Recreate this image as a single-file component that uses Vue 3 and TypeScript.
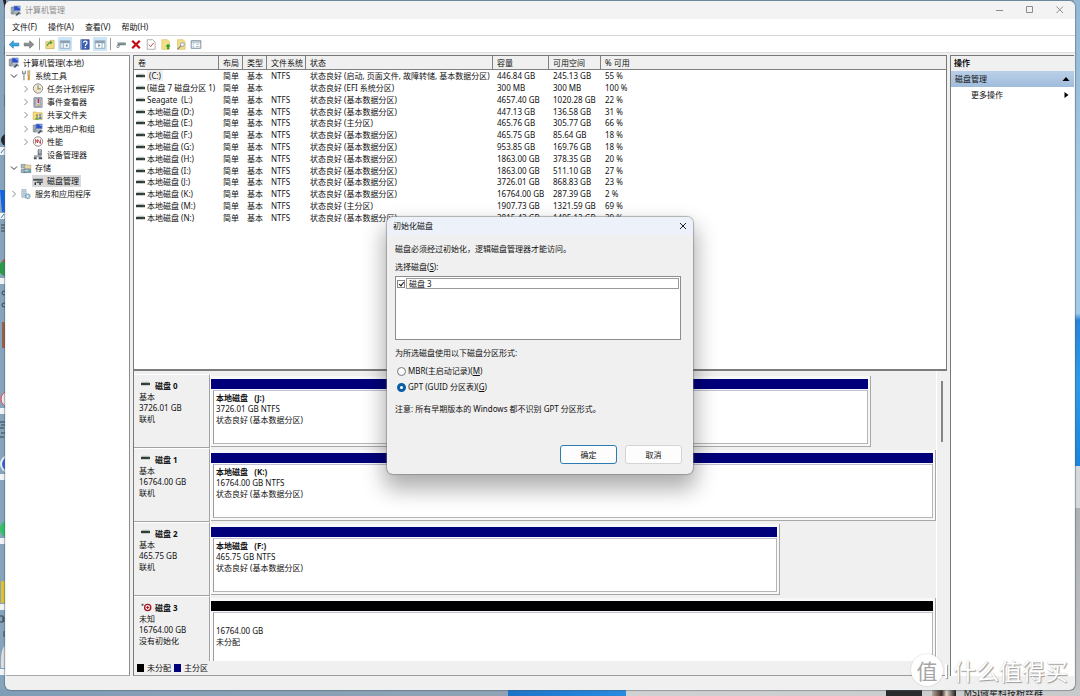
<script setup lang="ts">
import { ref } from 'vue'

interface TreeNode { label: string; icon: string; level: number; open?: boolean; leaf?: boolean; selected?: boolean }
interface Volume { name: string; fs: string; status: string; size: string; free: string; pct: string; focus?: boolean }
interface Disk { name: string; kind: string; size: string; state: string; width: number; title: string; detail: string; status: string; color: string; icon: string }

const menus: string[] = ['文件(F)', '操作(A)', '查看(V)', '帮助(H)']

const tools: { icon: string; label: string; on?: boolean }[] = [
  { icon: 'back', label: '后退' },
  { icon: 'forward', label: '前进' },
  { icon: 'sep', label: '' },
  { icon: 'folder-up', label: '上一级' },
  { icon: 'pane-left', label: '显示/隐藏控制台树', on: true },
  { icon: 'space', label: '' },
  { icon: 'help', label: '帮助' },
  { icon: 'pane-right', label: '显示/隐藏操作窗格', on: true },
  { icon: 'sep', label: '' },
  { icon: 'device', label: '磁盘' },
  { icon: 'delete', label: '删除' },
  { icon: 'doc-check', label: '属性' },
  { icon: 'doc-up', label: '打开' },
  { icon: 'doc-find', label: '浏览' },
  { icon: 'list', label: '设置' },
]

const tree: TreeNode[] = [
  { label: '计算机管理(本地)', icon: 'computer', level: 0 },
  { label: '系统工具', icon: 'tools', level: 1, open: true },
  { label: '任务计划程序', icon: 'clock', level: 2 },
  { label: '事件查看器', icon: 'event', level: 2 },
  { label: '共享文件夹', icon: 'share', level: 2 },
  { label: '本地用户和组', icon: 'computer', level: 2 },
  { label: '性能', icon: 'perf', level: 2 },
  { label: '设备管理器', icon: 'devmgr', level: 2, leaf: true },
  { label: '存储', icon: 'storage', level: 1, open: true },
  { label: '磁盘管理', icon: 'diskmgr', level: 2, leaf: true, selected: true },
  { label: '服务和应用程序', icon: 'services', level: 1 },
]

const columns: string[] = ['卷', '布局', '类型', '文件系统', '状态', '容量', '可用空间', '% 可用']
const basic = '状态良好 (基本数据分区)'
const primary = '状态良好 (主分区)'
const volumes: Volume[] = [
  { name: '(C:)', fs: 'NTFS', status: '状态良好 (启动, 页面文件, 故障转储, 基本数据分区)', size: '446.84 GB', free: '245.13 GB', pct: '55 %', focus: true },
  { name: '(磁盘 7 磁盘分区 1)', fs: '', status: '状态良好 (EFI 系统分区)', size: '300 MB', free: '300 MB', pct: '100 %' },
  { name: 'Seagate  (L:)', fs: 'NTFS', status: basic, size: '4657.40 GB', free: '1020.28 GB', pct: '22 %' },
  { name: '本地磁盘 (D:)', fs: 'NTFS', status: basic, size: '447.13 GB', free: '136.58 GB', pct: '31 %' },
  { name: '本地磁盘 (E:)', fs: 'NTFS', status: primary, size: '465.76 GB', free: '305.77 GB', pct: '66 %' },
  { name: '本地磁盘 (F:)', fs: 'NTFS', status: basic, size: '465.75 GB', free: '85.64 GB', pct: '18 %' },
  { name: '本地磁盘 (G:)', fs: 'NTFS', status: basic, size: '953.85 GB', free: '169.76 GB', pct: '18 %' },
  { name: '本地磁盘 (H:)', fs: 'NTFS', status: basic, size: '1863.00 GB', free: '378.35 GB', pct: '20 %' },
  { name: '本地磁盘 (I:)', fs: 'NTFS', status: basic, size: '1863.00 GB', free: '511.10 GB', pct: '27 %' },
  { name: '本地磁盘 (J:)', fs: 'NTFS', status: basic, size: '3726.01 GB', free: '868.83 GB', pct: '23 %' },
  { name: '本地磁盘 (K:)', fs: 'NTFS', status: basic, size: '16764.00 GB', free: '287.39 GB', pct: '2 %' },
  { name: '本地磁盘 (M:)', fs: 'NTFS', status: primary, size: '1907.73 GB', free: '1321.59 GB', pct: '69 %' },
  { name: '本地磁盘 (N:)', fs: 'NTFS', status: basic, size: '3815.43 GB', free: '1495.12 GB', pct: '39 %' },
]

const disks: Disk[] = [
  { name: '磁盘 0', kind: '基本', size: '3726.01 GB', state: '联机', width: 91, title: '本地磁盘   (J:)', detail: '3726.01 GB NTFS', status: basic, color: 'navy', icon: 'drive' },
  { name: '磁盘 1', kind: '基本', size: '16764.00 GB', state: '联机', width: 100, title: '本地磁盘   (K:)', detail: '16764.00 GB NTFS', status: basic, color: 'navy', icon: 'drive' },
  { name: '磁盘 2', kind: '基本', size: '465.75 GB', state: '联机', width: 78.5, title: '本地磁盘   (F:)', detail: '465.75 GB NTFS', status: basic, color: 'navy', icon: 'drive' },
  { name: '磁盘 3', kind: '未知', size: '16764.00 GB', state: '没有初始化', width: 100, title: '', detail: '16764.00 GB', status: '未分配', color: 'black', icon: 'drive-bad' },
]

const diskChecked = ref<boolean>(true)
const scheme = ref<'mbr' | 'gpt'>('gpt')
</script>

<template>
  <div class="desktop">
    <svg class="defs" aria-hidden="true">
      <symbol id="back" viewBox="0 0 16 16"><path d="M1 8 7 2.5V6h8v4H7v3.5z" fill="#35a7e0" stroke="#2b7cb0" /></symbol>
      <symbol id="forward" viewBox="0 0 16 16"><path d="M15 8 9 2.5V6H1v4h8v3.5z" fill="#8a8f94" stroke="#6d7276" /></symbol>
      <symbol id="folder-up" viewBox="0 0 16 16"><path d="M2 4h5l1-2h6v12H2z" fill="#f0dc86" stroke="#c4ab54" /><path d="M4 10c1-4 3-5 5-5" fill="none" stroke="#3f9b35" stroke-width="1.600" /><path d="m8 2.500 4 2.500-4 3z" fill="#3f9b35" /></symbol>
      <symbol id="pane-left" viewBox="0 0 16 16"><path d="M1 2.500h14v11H1z" fill="#fff" stroke="#7c8fa0" /><path d="M1 3h14v3H1z" fill="#8ca0b2" /><path d="M6 6v7" stroke="#7c8fa0" /><path d="m11.500 7-3 2.500 3 2.500z" fill="#4a90b8" /><path d="M2.500 8h2M2.500 10h2M2.500 12h2" stroke="#93b7d0" /></symbol>
      <symbol id="pane-right" viewBox="0 0 16 16"><path d="M1 2.500h14v11H1z" fill="#fff" stroke="#7c8fa0" /><path d="M1 3h14v3H1z" fill="#8ca0b2" /><path d="M11 6v7" stroke="#7c8fa0" /><path d="m5.500 7 3 2.500-3 2.500z" fill="#4a90b8" /></symbol>
      <symbol id="help" viewBox="0 0 16 16"><path d="M2 1h12v14H2z" fill="#3c5fb4" stroke="#24418a" /><path d="M3 1v14" stroke="#a8bbe6" /><path d="M6 5.500C6 2.500 11 2.500 11 5.500 11 7.500 8.500 7.500 8.500 10" fill="none" stroke="#fff" stroke-width="1.800" /><path d="M7.500 11.500h2v2h-2z" fill="#fff" /></symbol>
      <symbol id="device" viewBox="0 0 16 16"><path d="M3 5h12v4H3z" fill="#78858d" /><path d="M4 5.500h10" stroke="#b5c3cb" /><path d="M12 7.500h2" stroke="#4fd04f" /><circle cx="3.500" cy="11" r="1.700" fill="none" stroke="#555f66" /><path d="m5 10 2-2" stroke="#555f66" /></symbol>
      <symbol id="delete" viewBox="0 0 16 16"><path d="m2.500 2.500 11 11m0-11-11 11" stroke="#c50b17" stroke-width="3.200" /></symbol>
      <symbol id="doc-check" viewBox="0 0 16 16"><path d="M2.500 1h8L14 4.500V15H2.500z" fill="#fff" stroke="#8f8f8f" /><path d="m5 8 2.500 3L12 5.500" fill="none" stroke="#b0463c" stroke-width="1.300" /></symbol>
      <symbol id="doc-up" viewBox="0 0 16 16"><path d="M2 1h8l3 3v11H2z" fill="#f5df85" stroke="#d9c062" /><path d="m11 7 4 4h-2.500v4h-3v-4H7z" fill="#2fa02f" /></symbol>
      <symbol id="doc-find" viewBox="0 0 16 16"><path d="M3 1h8l3 3v11H3z" fill="#f5df85" stroke="#d9c062" /><circle cx="10" cy="8" r="3" fill="#e3f0f8" stroke="#8592a0" /><path d="m8 10-5 5" stroke="#7c8790" stroke-width="1.800" /></symbol>
      <symbol id="list" viewBox="0 0 16 16"><path d="M1 2.500h14v11H1z" fill="#fff" stroke="#6d8598" stroke-width="1.300" /><path d="M1 4.500h14" stroke="#6d8598" /><path d="m3 7 1 1 1.500-2M3 11l1 1 1.500-2" fill="none" stroke="#3e98c8" /><path d="M8 7.500h5M8 11h5" stroke="#8b949b" /></symbol>
      <symbol id="computer" viewBox="0 0 16 16"><path d="M1 3h4v10H1z" fill="#9ba9b3" stroke="#64727c" stroke-width=".7" /><path d="M5 1.500h9v7H5z" fill="#2e4fd0" stroke="#7f93b0" /><path d="M9 2h4.500v3z" fill="#8fb4f0" /><path d="M4 10h9l2 3H3z" fill="#bac4ca" stroke="#5c6a74" stroke-width=".7" /><path d="m7 15 5-5 1.500 1.500-4 4z" fill="#444c55" /></symbol>
      <symbol id="tools" viewBox="0 0 16 16"><path d="M3 1v4h4V1M5 5v10" fill="none" stroke="#8b9299" stroke-width="1.800" /><path d="M10.500 1h3v7h-3z" fill="#d9c389" stroke="#9c8243" stroke-width=".7" /><path d="M12 8v7" stroke="#c99a2a" stroke-width="3" /></symbol>
      <symbol id="clock" viewBox="0 0 16 16"><circle cx="8" cy="8" r="6.800" fill="#f3ead0" stroke="#808489" stroke-width="1.300" /><path d="M8 3.500V8.500H12" fill="none" stroke="#54606c" stroke-width="1.200" /><path d="M8 8.500 4 12" stroke="#d7a33a" /></symbol>
      <symbol id="event" viewBox="0 0 16 16"><path d="M2 1h12v14H2z" fill="#c6cbd1" stroke="#70767e" /><path d="M5 2h6v12H5z" fill="#e9edf5" stroke="#5f74b5" /><path d="M8.500 3v6" stroke="#c63128" stroke-width="2.400" /><path d="M7 10h3v3H7z" fill="#d7ad38" /><path d="M3 3v10" stroke="#58606a" stroke-dasharray="1 1" /></symbol>
      <symbol id="share" viewBox="0 0 16 16"><path d="M1 3h5l1 1h7v10H1z" fill="#f3dd86" stroke="#cdb150" /><circle cx="6.500" cy="8" r="1.700" fill="#b98048" /><circle cx="11" cy="7" r="1.700" fill="#6b9bc8" /><path d="M4 14c0-5 5-5 5 0z" fill="#6da35c" /><path d="M9 13c0-5 4.500-5 4.500 0z" fill="#5c84c4" /></symbol>
      <symbol id="perf" viewBox="0 0 16 16"><circle cx="8" cy="8" r="6.800" fill="#fff" stroke="#8b8186" stroke-width="1.400" /><path d="M4.500 11V5l3 5V5l4 6V5" fill="none" stroke="#b22e32" stroke-width="1.200" /></symbol>
      <symbol id="devmgr" viewBox="0 0 16 16"><path d="M8 1h5v8H8z" fill="#7e8a94" stroke="#444e58" stroke-width=".7" /><path d="M9 2.500h3M9 4.500h3" stroke="#fff" /><path d="M2 9h11v3H2z" fill="#9da6ad" /><path d="M2 12h4v3H2zM9 12h5v3H9z" fill="#424b53" /></symbol>
      <symbol id="storage" viewBox="0 0 16 16"><path d="M1 2h6v5H1zM1 9h6v5H1z" fill="#a9b9c2" stroke="#61717a" stroke-width=".8" /><path d="M6 3h9v5H6z" fill="#e6d8a8" stroke="#a9975e" stroke-width=".8" /><path d="M5 9h10v5H5z" fill="#7fa6bd" stroke="#54788c" stroke-width=".8" /><path d="M6 11h5" stroke="#e5f3ff" /><path d="M12 11.500h2" stroke="#37bd37" stroke-width="1.500" /></symbol>
      <symbol id="diskmgr" viewBox="0 0 16 16"><path d="M1 4h14v3H1z" fill="#4a5359" /><path d="M2 3.500h12" stroke="#b6bec3" /><path d="M6 8h9v2H6z" fill="#4a5359" /><path d="M3 9h2v4H3zM10 10h2v3h-2z" fill="#23292d" /></symbol>
      <symbol id="services" viewBox="0 0 16 16"><path d="M2 1h6v11H2z" fill="#dce6ed" stroke="#8094a4" /><path d="M3.500 4h3M3.500 6.500h3M3.500 9h3" stroke="#7fa1b7" /><circle cx="10.500" cy="10.500" r="3.500" fill="#a9c9df" stroke="#6a8ca4" stroke-dasharray="1.500 1" stroke-width="1.500" /><circle cx="10.500" cy="10.500" r="1.200" fill="#fff" /></symbol>
      <symbol id="drive" viewBox="0 0 16 8"><path d="m2 1h12l2 2H0z" fill="#b9c2bd" /><path d="M0 3h16v4H0z" fill="#2f3b36" /><path d="M12 5h2" stroke="#4fae58" /></symbol>
      <symbol id="drive-bad" viewBox="0 0 18 14"><path d="M1 1h3v3H1z" fill="#3d4642" /><circle cx="11" cy="7" r="5" fill="#fff" stroke="#a31524" stroke-width="2.200" /><path d="M11 4.500v5M8.500 7h5" stroke="#a31524" stroke-width="1.800" /></symbol>
    </svg>

    <svg class="left-edge" viewBox="0 0 6 696" preserveAspectRatio="none" aria-hidden="true">
      <path d="M3 0h3v9H5z" fill="#2b1b1c" />
      <path d="M4 46h2v9H4zM4 95h2v12H4z" fill="#63839a" />
      <circle cx="7" cy="140" r="6" fill="#20252c" />
      <path d="M0 147h6v8H0z" fill="#f0f4f7" /><path d="m1 153 3-4" stroke="#347bb0" />
      <path d="M0 190h6v22H2z" fill="#1364e4" />
      <path d="M0 213h5v6H0z" fill="#f0f4f7" /><path d="m1 218 3-4" stroke="#347bb0" />
      <path d="M1 225h4M1 228h4M1 231h4" stroke="#34414b" />
      <circle cx="8" cy="268" r="9" fill="#2b9a49" /><path d="M2 261 6 258v5z" fill="#d94235" />
      <path d="M0 278h5v6H0z" fill="#f0f4f7" /><circle cx="4" cy="293" r="2" fill="none" stroke="#34414b" /><circle cx="4" cy="305" r="2" fill="none" stroke="#34414b" />
      <path d="M2 322h4v26H2z" fill="#9a5f44" />
      <circle cx="9" cy="399" r="8" fill="#f4e8ea" stroke="#d84861" /><path d="M0 408h5v6H0z" fill="#f0f4f7" />
      <path d="M0 422h5M1 425h4M0 428h4M1 433h4M0 437h4" stroke="#34414b" />
      <circle cx="9" cy="464" r="8" fill="#3463ce" stroke="#e9eff8" stroke-width="2" /><path d="M0 474h5v6H0z" fill="#f0f4f7" />
      <circle cx="9" cy="529" r="9" fill="#32c265" /><path d="M0 538h5v6H0z" fill="#f0f4f7" />
      <path d="M1 581h5v22H1z" fill="#dec12f" /><path d="M0 604h5v6H0z" fill="#f0f4f7" />
      <path d="M0 616h3v6H0M4 617v5M4 631v6" fill="none" stroke="#34414b" />
      <path d="M6 645Q0 648 1 668h5z" fill="#dedede" /><path d="M0 669h5v6H0z" fill="#f0f4f7" />
    </svg>
    <div class="right-edge"></div>
    <div class="taskbar">
      <span class="task-dark"></span>
      <span class="task-thumb"></span>
      <span class="task-text">MSI微星科技粉丝群</span>
    </div>

    <main class="window">
      <header class="titlebar">
        <svg class="ico"><use href="#computer" /></svg>
        <h1>计算机管理</h1>
        <div class="caption-buttons">
          <button type="button" aria-label="最小化"><svg viewBox="0 0 10 10"><path d="M1 5.500h7" /></svg></button>
          <button type="button" aria-label="最大化"><svg viewBox="0 0 10 10"><path d="M1.500 1.500h6v6h-6z" /></svg></button>
          <button type="button" aria-label="关闭"><svg viewBox="0 0 10 10"><path d="m1.500 1.500 6.500 6.500m0-6.500-6.500 6.500" /></svg></button>
        </div>
      </header>

      <nav class="menubar">
        <button v-for="m in menus" :key="m" type="button">{{ m }}</button>
      </nav>

      <div class="toolbar">
        <template v-for="(t, i) in tools" :key="i">
          <span v-if="t.icon === 'sep'" class="sep"></span>
          <span v-else-if="t.icon === 'space'" class="space"></span>
          <button v-else type="button" :class="{ on: t.on }" :aria-label="t.label"><svg class="ico"><use :href="'#' + t.icon" /></svg></button>
        </template>
      </div>

      <div class="content">
        <aside class="tree-pane">
          <ul class="tree">
            <li v-for="n in tree" :key="n.label" :class="'level' + n.level">
              <svg v-if="n.level > 0" class="chevron" :class="{ hidden: n.leaf }" viewBox="0 0 12 12">
                <path v-if="n.open" d="m3 4.500 3 3 3-3" class="dark" />
                <path v-else d="m4.500 3 3 3-3 3" />
              </svg>
              <span class="node" :class="{ selected: n.selected }">
                <svg class="ico"><use :href="'#' + n.icon" /></svg>
                <span class="label">{{ n.label }}</span>
              </span>
            </li>
          </ul>
        </aside>

        <section class="main-pane">
          <div class="volumes">
            <table>
              <colgroup><col v-for="(c, i) in columns" :key="c" :class="'c' + i" /></colgroup>
              <thead><tr><th v-for="c in columns" :key="c" scope="col">{{ c }}</th></tr></thead>
              <tbody>
                <tr v-for="v in volumes" :key="v.name">
                  <td class="vol"><svg class="drive"><use href="#drive" /></svg><span :class="{ focus: v.focus }">{{ v.name }}</span></td>
                  <td>简单</td>
                  <td>基本</td>
                  <td>{{ v.fs }}</td>
                  <td>{{ v.status }}</td>
                  <td>{{ v.size }}</td>
                  <td>{{ v.free }}</td>
                  <td>{{ v.pct }}</td>
                </tr>
              </tbody>
            </table>
          </div>

          <div class="disk-view">
            <div class="disk-list">
              <div v-for="d in disks" :key="d.name" class="disk">
                <div class="disk-info">
                  <strong><svg :class="d.icon"><use :href="'#' + d.icon" /></svg>{{ d.name }}</strong>
                  <span>{{ d.kind }}</span>
                  <span>{{ d.size }}</span>
                  <span>{{ d.state }}</span>
                </div>
                <div class="disk-track">
                  <div class="space-box" :style="{ width: d.width + '%' }">
                    <div class="stripe" :class="d.color"></div>
                    <div class="partition">
                      <strong>{{ d.title }}</strong>
                      <span>{{ d.detail }}</span>
                      <span>{{ d.status }}</span>
                    </div>
                  </div>
                </div>
              </div>
            </div>
            <div class="scroll"><span class="thumb"></span></div>
            <div class="legend">
              <span class="swatch black"></span><span>未分配</span>
              <span class="swatch navy"></span><span>主分区</span>
            </div>
          </div>
        </section>

        <aside class="actions">
          <h2>操作</h2>
          <button type="button" class="group">磁盘管理<svg viewBox="0 0 8 8"><path d="m4 2 3.500 4h-7z" /></svg></button>
          <button type="button" class="more">更多操作<svg viewBox="0 0 8 8"><path d="m2.500 1 4 3-4 3z" /></svg></button>
        </aside>
      </div>
      <footer class="status"></footer>
    </main>

    <form class="dialog" role="dialog" aria-labelledby="dlg-title" @submit.prevent>
      <header>
        <h2 id="dlg-title">初始化磁盘</h2>
        <button type="button" aria-label="关闭"><svg viewBox="0 0 8 8"><path d="m1 1 6 6m0-6-6 6" /></svg></button>
      </header>
      <div class="dialog-body">
        <p>磁盘必须经过初始化，逻辑磁盘管理器才能访问。</p>
        <p class="caption">选择磁盘(<u>S</u>):</p>
        <div class="listbox">
          <label><input v-model="diskChecked" type="checkbox" /><span>磁盘 3</span></label>
        </div>
        <p class="scheme">为所选磁盘使用以下磁盘分区形式:</p>
        <label class="radio"><input v-model="scheme" type="radio" name="scheme" value="mbr" /><span>MBR(主启动记录)(<u>M</u>)</span></label>
        <label class="radio"><input v-model="scheme" type="radio" name="scheme" value="gpt" /><span>GPT (GUID 分区表)(<u>G</u>)</span></label>
        <p class="note">注意: 所有早期版本的 Windows 都不识别 GPT 分区形式。</p>
        <div class="buttons">
          <button type="submit" class="primary">确定</button>
          <button type="button">取消</button>
        </div>
      </div>
    </form>

    <div class="watermark"><span class="seal">值</span><span class="words">什么值得买</span></div>
  </div>
</template>

<style>
html, body { margin: 0; }
body { overflow: hidden; }
</style>

<style scoped>
.desktop, .desktop * { box-sizing: border-box; }
.desktop {
  position: relative;
  display: flex;
  flex-direction: column;
  min-height: 100vh;
  padding: 1px 5px 6px;
  overflow: hidden;
  background: #86a5bd;
  color: #111;
  font: 8px/12px "Noto Sans", "Noto Sans CJK SC", sans-serif;
}
.defs { position: absolute; width: 0; height: 0; }
.left-edge { position: absolute; left: 0; top: 0; width: 6px; height: 100%; }
.right-edge {
  position: absolute; right: 0; top: 0; width: 6px; height: 100%;
  background: linear-gradient(#93b9d6 0, #a5cbe4 30%, #a3cce8 45%, #2684d8 46%, #2f9be8 55%, #1c83dc 67%, #d5d9dc 67%, #d5d9dc 73%, #aeb1b3 73%, #c4c6c8 100%);
}
.taskbar {
  position: absolute; left: 0; right: 0; bottom: 0; height: 6px;
  display: flex; align-items: center; overflow: hidden; padding-right: 37px; justify-content: flex-end;
  background: linear-gradient(90deg, #7f9db7 0, #8fa3b4 47%, #1c74c8 47%, #2a8be0 58%, #cfd1d3 58%, #c8cacc 100%);
}
.task-dark { width: 36px; height: 6px; background: #2b2b2c; }
.task-thumb { width: 24px; height: 6px; margin: 0 8px 0 10px; background: linear-gradient(90deg, #b7a99a, #3b2c2a 40%, #e0d2c6 60%, #1d1a1a); }
.task-text { flex: none; font-size: 9px; line-height: 12px; color: #111; }

button { margin: 0; padding: 0; border: 0; background: none; color: inherit; font: inherit; cursor: default; }
h1, h2, p, ul { margin: 0; padding: 0; font: inherit; }
.ico { display: block; flex: none; width: 12px; height: 11px; }

.window {
  position: relative;
  flex: 1;
  display: flex;
  flex-direction: column;
  overflow: hidden;
  border-radius: 6px;
  background: #f0f0f0;
  box-shadow: 0 0 1px 1px rgba(70, 90, 105, .45);
  padding: 0 1px;
}
.titlebar { display: flex; align-items: center; height: 18px; margin: 0 -1px; padding-left: 5px; background: #f3f3f3; }
.titlebar h1 { margin-left: 3px; color: #8c8c8c; flex: 1; }
.caption-buttons { display: flex; }
.caption-buttons button { width: 30px; height: 18px; display: grid; place-items: center; }
.caption-buttons svg { width: 10px; height: 10px; fill: none; stroke: #8b8b8b; }
.menubar { display: flex; gap: 11px; height: 17px; margin: 0 -1px; padding: 0 7px; align-items: center; background: #fff; border-bottom: 1px solid #d5d5d5; }
.toolbar { display: flex; gap: 1px; height: 17px; margin: 0 -1px; padding: 0 2px; align-items: center; background: #fff; border-bottom: 1px solid #dedede; }
.toolbar button { display: grid; place-items: center; width: 14px; height: 14px; }
.toolbar button.on { background: #cde6f7; }
.toolbar .sep { width: 5px; height: 12px; background: linear-gradient(#9a9a9a, #9a9a9a) center / 1px 100% no-repeat; }
.toolbar .space { width: 4px; }

.content { flex: 1; min-height: 0; display: grid; grid-template-columns: 124px minmax(0, 1fr) 124px; gap: 3px; padding-top: 2px; }
.tree-pane { border-top: 1px solid #8c8c8c; border-right: 1px solid #8c8c8c; border-bottom: 1px solid #a8a8a8; background: #fff; }
.tree { display: flex; flex-direction: column; height: 145px; list-style: none; }
.tree li { flex: 1; display: flex; align-items: center; padding-left: 2px; white-space: nowrap; }
.tree li.level2 { padding-left: 14px; }
.chevron { flex: none; width: 12px; height: 12px; fill: none; stroke: #8a8a8a; }
.chevron .dark { stroke: #333; }
.chevron.hidden { visibility: hidden; }
.node { display: flex; align-items: center; height: 12px; padding-right: 2px; }
.node.selected { background: #d9d9d9; }
.label { padding-left: 3px; }

.main-pane { display: flex; flex-direction: column; min-height: 0; border-left: 1px solid #787878; border-top: 1px solid #787878; border-bottom: 1px solid #9c9c9c; }
.volumes { flex: 1; min-height: 0; background: #fff; border-right: 1px solid #787878; border-bottom: 2px solid #7c7c7c; }
table { width: 100%; height: 167px; border-collapse: separate; border-spacing: 0; table-layout: fixed; }
.c0 { width: 85px; }
.c1, .c2 { width: 24px; }
.c3 { width: 39px; }
.c4 { width: 187px; }
.c5 { width: 56px; }
.c6 { width: 52px; }
th { height: 14px; padding: 0 0 0 4px; text-align: left; font-weight: 400; background: #f0f0f0; border-right: 1px solid #808080; border-bottom: 1px solid #808080; line-height: 12px; white-space: nowrap; }
th:last-child { border-right: 0; }
td { padding: 0 0 0 4px; line-height: 11px; white-space: pre; }
td.vol { padding-left: 2px; }
.drive { width: 9px; height: 5px; }
td .drive { margin-right: 2px; vertical-align: 1px; }
.focus { background: #f0f0f0; padding: 0 2px; }

.disk-view { display: grid; grid-template-columns: minmax(0, 1fr) 11px; grid-template-rows: 290px 14px; }
.disk-list { overflow: hidden; padding-top: 3px; }
.disk { display: grid; grid-template-columns: 76px minmax(0, 1fr); height: 74px; }
.disk-info { display: flex; flex-direction: column; padding: 4px 0 0 5px; line-height: 11px; border-top: 1px solid #fff; border-right: 1px solid #a2a2a2; border-bottom: 1px solid #a2a2a2; }
.disk-info strong { display: flex; align-items: center; height: 12px; padding-left: 2px; }
.disk-info .drive { margin: -4px 5px 0 0; }
.drive-bad { width: 11px; height: 9px; margin-right: 3px; }
.disk-track { padding: 2px 0 1px; border-left: 1px solid #fff; }
.space-box { display: flex; flex-direction: column; height: 71px; padding: 3px 2px 2px 0; border-right: 1px solid #a8a8a8; border-bottom: 1px solid #a8a8a8; background: #f8f8f8; }
.stripe { height: 10px; }
.navy { background: #00007b; }
.black { background: #000; }
.partition { flex: 1; display: flex; flex-direction: column; margin: 1px 0 0 2px; padding: 1px 0 0 2px; line-height: 11px; white-space: pre; background: #fff; border: 1px solid #b5b5b5; border-top-color: #c2c0d2; border-left-color: #9c9c9c; }
.partition strong { height: 11px; }
.scroll { display: flex; justify-content: center; padding-top: 10px; border-left: 1px solid #fff; }
.thumb { width: 2px; height: 61px; background: #858585; }
.legend { grid-column: 1 / -1; display: flex; align-items: center; gap: 3px; padding-left: 3px; }
.swatch { width: 7px; height: 8px; }

.actions { border-left: 1px solid #787878; border-top: 1px solid #787878; background: #fff; }
.actions h2 { height: 15px; padding-left: 3px; line-height: 14px; font-weight: 700; background: #f0f0f0; }
.actions button { display: flex; width: 100%; height: 16px; align-items: center; justify-content: space-between; padding: 0 4px; }
.actions .group { background: linear-gradient(#bad0e8, #a0bcdb); }
.actions .more { padding-left: 20px; }
.actions svg { width: 8px; height: 8px; fill: #000; }
.status { height: 14px; }

.dialog {
  position: absolute; left: 387px; top: 217px; width: 306px;
  border-radius: 6px; background: #f0f0f0;
  box-shadow: 0 0 1px 1px rgba(120, 120, 120, .55), 0 12px 22px 3px rgba(0, 0, 0, .32);
}
.dialog header { display: flex; justify-content: space-between; align-items: center; height: 18px; padding: 0 6px; border-radius: 6px 6px 0 0; background: #edf2fa; }
.dialog header svg { display: block; width: 8px; height: 8px; fill: none; stroke: #222; }
.dialog-body { padding: 8px 12px 10px 8px; }
.dialog-body p { line-height: 12px; }
.dialog-body .caption { margin-top: 6px; }
.listbox { height: 64px; margin: 3px 0 7px; padding: 1px; background: #fff; border: 1px solid #8d8d8d; }
.listbox label { display: flex; height: 11px; align-items: center; }
.listbox label span { flex: 1; height: 11px; margin-left: 1px; padding-left: 2px; line-height: 9px; border: 1px solid #999; }
.listbox input { appearance: none; position: relative; width: 8px; height: 8px; margin: 0; border: 1px solid #888; background: #fff; }
.listbox input:checked::after { content: ""; position: absolute; left: 2px; top: 0; width: 2px; height: 4px; border: solid #111; border-width: 0 1px 1px 0; transform: rotate(40deg); }
.radio { display: flex; align-items: center; gap: 2px; height: 16px; padding-left: 2px; }
.dialog-body .scheme { margin-bottom: 4px; }
.radio input { appearance: none; width: 9px; height: 9px; margin: 0; border: 1px solid #777; border-radius: 50%; background: #fafafa; }
.radio input:checked { border: 3px solid #0a5da6; background: #fff; }
.dialog-body .note { margin-top: 8px; }
.buttons { display: flex; justify-content: flex-end; gap: 8px; margin: 30px -1px 0 0; }
.buttons button { width: 57px; height: 19px; border: 1px solid #d4d4d4; border-radius: 3px; background: #fdfdfd; }
.buttons .primary { border-color: #2b7cb3; }

.watermark { position: absolute; right: 12px; bottom: 10px; display: flex; align-items: center; gap: 10px; font-family: "Noto Sans CJK SC", sans-serif; }
.seal { display: grid; place-items: center; width: 32px; height: 32px; border-radius: 50%; background: #fff; color: #a4a4a4; font-size: 21px; line-height: 30px; box-shadow: 0 0 2px rgba(0, 0, 0, .2); }
.words { position: relative; color: #fff; font-size: 23px; line-height: 32px; text-shadow: 1px 1px 1px #999, 0 0 1px #bbb; }
.words::before { content: ""; position: absolute; left: -8px; top: 10px; width: 2px; height: 14px; background: #fff; box-shadow: 1px 1px 1px #999; }
</style>
